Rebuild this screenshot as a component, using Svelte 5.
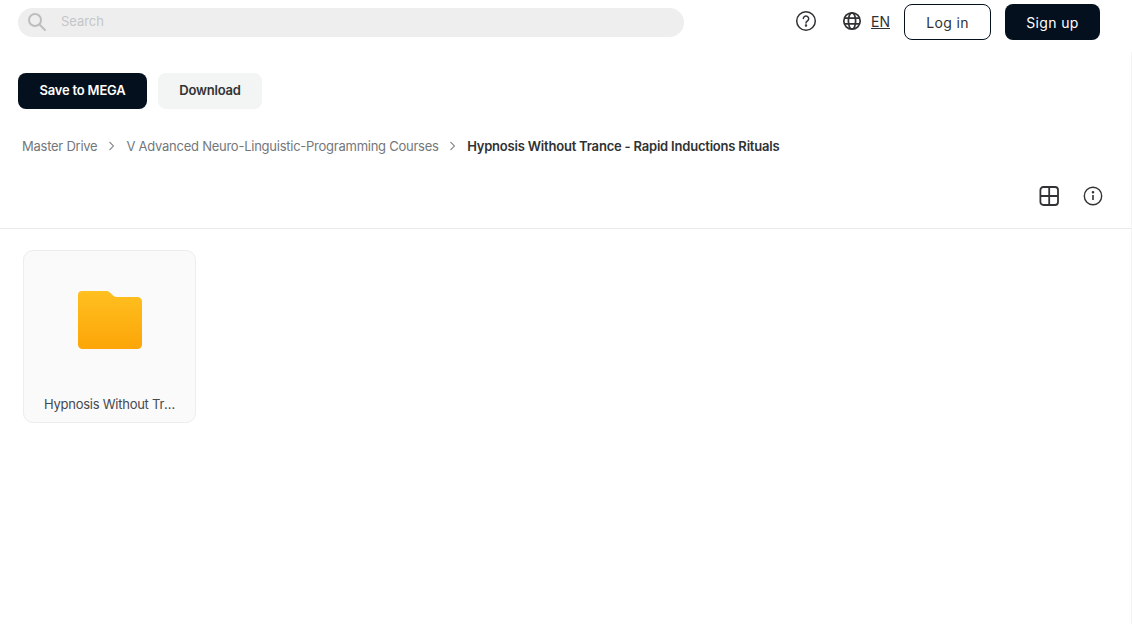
<script>
	let crumbs = ['Master Drive', 'V Advanced Neuro-Linguistic-Programming Courses'];
	let current = 'Hypnosis Without Trance - Rapid Inductions Rituals';
</script>

<div class="page">
	<header class="top">
		<div class="search">
			<svg width="20" height="20" viewBox="0 0 20 20" fill="none" stroke="#bdbdbd" stroke-width="2">
				<circle cx="8" cy="8" r="6" />
				<path d="M12.5 12.5 18 18" stroke-linecap="round" />
			</svg>
			<span>Search</span>
		</div>
		<div class="right">
			<svg class="help" width="22" height="22" viewBox="0 0 22 22" fill="none" stroke="#303233" stroke-width="1.5">
				<circle cx="11" cy="11" r="9.3" />
				<path d="M8.3 8.6a2.7 2.7 0 1 1 4.2 2.3c-.9.6-1.500 1-1.500 2.100" stroke-linecap="round" />
				<circle cx="11" cy="15.6" r=".5" fill="#303233" />
			</svg>
			<svg class="globe" width="20" height="20" viewBox="0 0 20 20" fill="none" stroke="#303233" stroke-width="1.7">
				<circle cx="10" cy="10" r="8.200" />
				<ellipse cx="10" cy="10" rx="3.600" ry="8.200" />
				<path d="M2.200 7.200h15.600M2.200 12.800h15.600" />
			</svg>
			<span class="lang">EN</span>
			<button class="btn login">Log in</button>
			<button class="btn signup">Sign up</button>
		</div>
	</header>

	<div class="content">
		<div class="actions">
			<button class="act save">Save to MEGA</button>
			<button class="act download">Download</button>
		</div>

		<nav class="crumbs">
			{#each crumbs as c}
				<span>{c}</span>
				<svg width="8" height="10" viewBox="0 0 8 10" fill="none" stroke="#8a8d8f" stroke-width="1.1">
					<path d="M1.500 1l4 4-4 4" />
				</svg>
			{/each}
			<b>{current}</b>
		</nav>

		<div class="tools">
			<svg width="20" height="20" viewBox="0 0 20 20" fill="none" stroke="#303233" stroke-width="1.8">
				<rect x="1.400" y="1" width="17.600" height="18" rx="3" />
				<path d="M10.200 1v18M1.400 10h17.600" />
			</svg>
			<svg width="20" height="20" viewBox="0 0 20 20" fill="none" stroke="#303233" stroke-width="1.4">
				<circle cx="10" cy="10" r="8.700" />
				<path d="M10 9v5" stroke-width="1.600" />
				<circle cx="10" cy="6.300" r=".6" fill="#303233" />
			</svg>
		</div>

		<main class="grid">
			<div class="card">
				<div class="thumb">
					<svg width="64" height="58" viewBox="0 0 64 58">
						<defs>
							<linearGradient id="fold" x1="0" y1="0" x2="0" y2="1">
								<stop offset="0" stop-color="#ffc020" />
								<stop offset="1" stop-color="#fca508" />
							</linearGradient>
						</defs>
						<path d="M4 0h24c1.800 0 3 .6 4.500 1.900C34.500 3.700 36 6 39 6h20.500A4.500 4.500 0 0 1 64 10.500v43a4.500 4.500 0 0 1-4.500 4.500h-55A4.500 4.500 0 0 1 0 53.500V4a4 4 0 0 1 4-4z" fill="url(#fold)" />
					</svg>
				</div>
				<div class="name">Hypnosis Without Trance - Rapid Inductions Rituals</div>
			</div>
		</main>
	</div>
</div>

<style>
	:global(body) {
		background: #fff;
		font-family: Inter, "Liberation Sans", sans-serif;
	}
	.page {
		height: 624px;
		overflow: hidden;
		color: #303233;
	}
	.top {
		display: flex;
		justify-content: space-between;
		align-items: flex-start;
		padding: 4px 32px 0 18px;
		height: 48px;
	}
	.search {
		width: 666px;
		height: 29px;
		margin-top: 4px;
		border-radius: 15px;
		background: #eeeeee;
		display: flex;
		align-items: center;
		gap: 14px;
		padding: 0 0 2px 9px;
		box-sizing: border-box;
		font-size: 13px;
		letter-spacing: -0.05px;
		color: #c4c6c7;
	}
	.search span {
		padding-bottom: 2px;
	}
	.right {
		display: flex;
		align-items: center;
		height: 36px;
	}
	.help {
		margin: -2px 26px 0 -1px;
	}
	.globe {
		margin: -3px 1px 0 -1px;
	}
	.lang {
		margin: -1px 14px 0 8px;
		font-size: 14px;
		text-decoration: underline;
	}
	.btn {
		height: 36px;
		padding: 0;
		border-radius: 8px;
		font: 400 14px Inter, sans-serif;
		letter-spacing: 0.35px;
		box-sizing: border-box;
	}
	.login {
		width: 87px;
		background: #fff;
		border: 1px solid #04101e;
		color: #303233;
		margin-right: 14px;
	}
	.signup {
		width: 95px;
		background: #04101e;
		border: 0;
		color: #fff;
	}
	.content {
		height: 572px;
		border-right: 1px solid #f3f3f3;
	}
	.actions {
		display: flex;
		gap: 11px;
		padding: 21px 0 0 18px;
	}
	.act {
		height: 36px;
		padding: 0 0 2px;
		border: 0;
		border-radius: 8px;
		font: 600 13px Inter, sans-serif;
		letter-spacing: -0.2px;
	}
	.save {
		width: 129px;
		background: #04101e;
		color: #fff;
	}
	.download {
		width: 104px;
		background: #f3f4f4;
		color: #303233;
	}
	.crumbs {
		display: flex;
		align-items: center;
		gap: 10.5px;
		padding: 28px 0 0 22px;
		height: 18px;
		font-size: 13px;
		letter-spacing: -0.25px;
		color: #74777a;
	}
	.crumbs b {
		font-weight: 600;
		letter-spacing: -0.2px;
		margin-left: -0.5px;
		color: #303233;
	}
	.tools {
		display: flex;
		justify-content: flex-end;
		gap: 24px;
		padding: 31px 28px 0 0;
		height: 42px;
		border-bottom: 1px solid #e9eaea;
	}
	.grid {
		padding: 21px 0 0 23px;
	}
	.card {
		width: 173px;
		height: 173px;
		box-sizing: border-box;
		background: #fafafa;
		border: 1px solid #ededed;
		border-radius: 10px;
		display: flex;
		flex-direction: column;
	}
	.thumb {
		display: flex;
		justify-content: center;
		box-sizing: border-box;
		padding-top: 40px;
		height: 145px;
	}
	.name {
		margin: 0 18px 0 20px;
		font-size: 13px;
		line-height: 16px;
		letter-spacing: -0.25px;
		white-space: nowrap;
		overflow: hidden;
		text-overflow: ellipsis;
		color: #45494d;
	}
</style>
